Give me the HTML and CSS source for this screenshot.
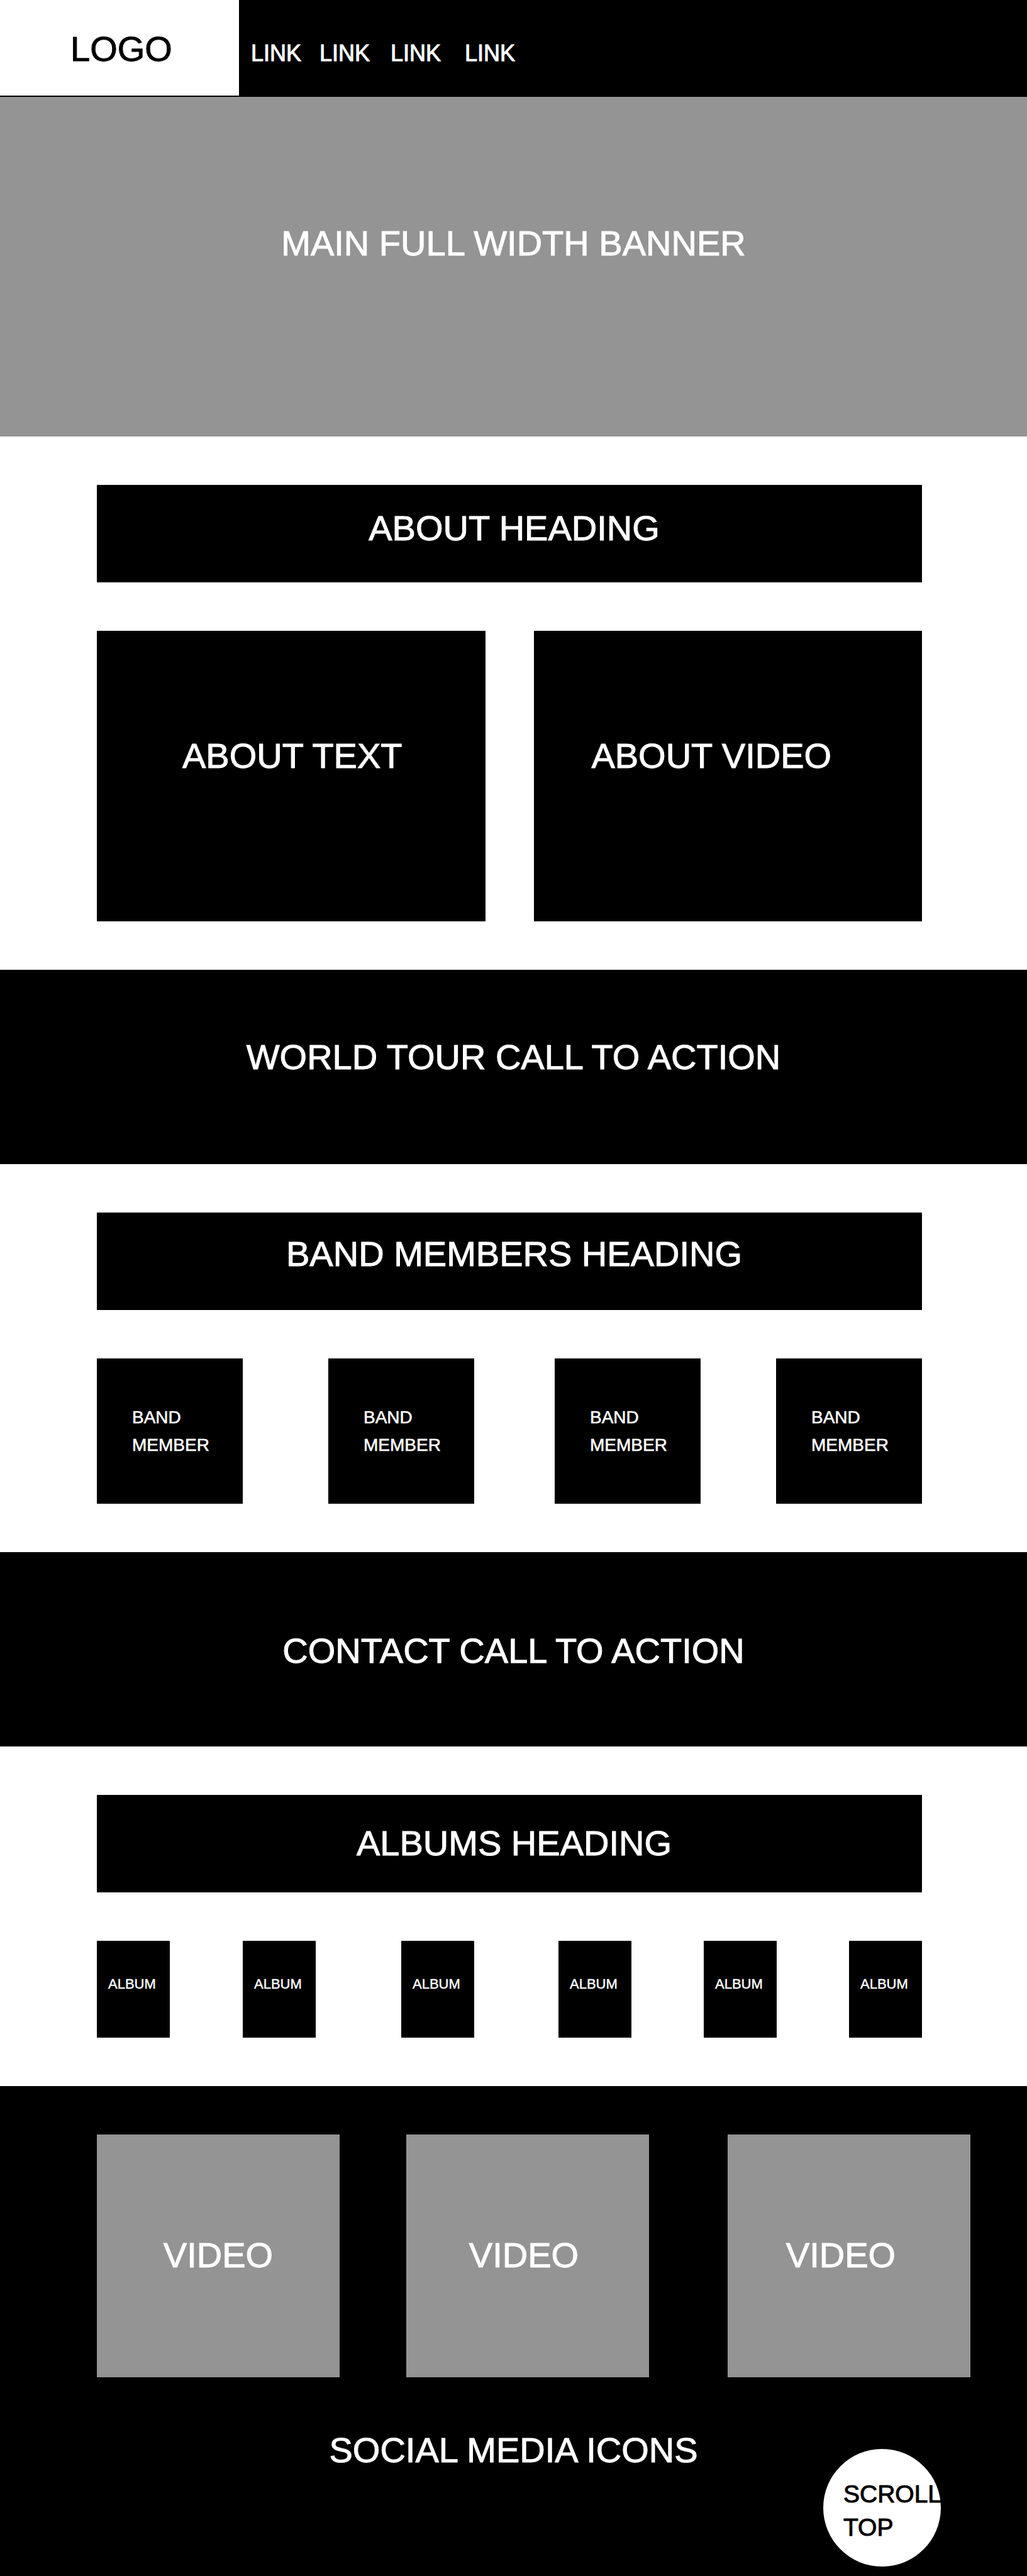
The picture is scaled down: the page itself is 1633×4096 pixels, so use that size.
FILE: index.html
```html
<!DOCTYPE html>
<html lang="en">
<head>
  <meta charset="utf-8">
  <meta name="viewport" content="width=device-width, initial-scale=1">
  <title>Band Wireframe</title>
  <link rel="stylesheet" href="styles.css">
</head>
<body>
  <header class="header" id="top">
    <a class="logo" href="#top">LOGO</a>
    <nav class="nav">
      <a href="#about">LINK</a>
      <a href="#band">LINK</a>
      <a href="#contact">LINK</a>
      <a href="#albums">LINK</a>
    </nav>
  </header>

  <main>
    <section class="banner">
      <h1 class="title">MAIN FULL WIDTH BANNER</h1>
    </section>

    <section class="section" id="about">
      <h2 class="heading heading-about">ABOUT HEADING</h2>
      <div class="about">
        <div class="panel">ABOUT TEXT</div>
        <div class="panel panel-video">ABOUT VIDEO</div>
      </div>
    </section>

    <section class="cta cta-tour">
      <h2 class="title">WORLD TOUR CALL TO ACTION</h2>
    </section>

    <section class="section" id="band">
      <h2 class="heading heading-band">BAND MEMBERS HEADING</h2>
      <div class="members">
        <div class="member">BAND<br>MEMBER</div>
        <div class="member">BAND<br>MEMBER</div>
        <div class="member">BAND<br>MEMBER</div>
        <div class="member">BAND<br>MEMBER</div>
      </div>
    </section>

    <section class="cta cta-contact" id="contact">
      <h2 class="title">CONTACT CALL TO ACTION</h2>
    </section>

    <section class="section" id="albums">
      <h2 class="heading heading-albums">ALBUMS HEADING</h2>
      <div class="albums">
        <div class="album">ALBUM</div>
        <div class="album">ALBUM</div>
        <div class="album">ALBUM</div>
        <div class="album">ALBUM</div>
        <div class="album">ALBUM</div>
        <div class="album">ALBUM</div>
      </div>
    </section>
  </main>

  <footer class="footer">
    <div class="videos">
      <div class="video">VIDEO</div>
      <div class="video video-second">VIDEO</div>
      <div class="video video-third">VIDEO</div>
    </div>
    <h2 class="title social">SOCIAL MEDIA ICONS</h2>
    <a class="scroll-top" href="#top">SCROLL<br>TOP</a>
  </footer>
</body>
</html>
```
FILE: styles.css
```css
* {
  box-sizing: border-box;
}

body {
  margin: 0;
  background: #fff;
  color: #fff;
  font-family: "Liberation Sans", Arial, sans-serif;
  font-size: 56px;
  line-height: 64px;
  /* Brings the regular face up to a medium weight */
  -webkit-text-stroke: 1px currentColor;
}

a {
  color: inherit;
  text-decoration: none;
}

h1,
h2 {
  margin: 0;
  font-size: 56px;
  font-weight: 400;
}

.title {
  text-align: center;
}

/* Header */
.header {
  display: flex;
  align-items: flex-start;
  padding-bottom: 2px;
  background: #000;
}

.logo {
  width: 380px;
  min-height: 152px;
  padding: 46px 0 0 112px;
  background: #fff;
  color: #000;
}

.nav {
  display: grid;
  grid-template-columns: 109px 113px 118px auto;
  padding: 63px 0 0 19px;
  font-size: 36px;
  line-height: 44px;
}

.banner {
  min-height: 540px;
  padding-top: 201px;
  background: #949494;
}

/* White sections */
.section {
  display: grid;
  gap: 77px;
  padding: 77px 167px 77px 154px;
}

.heading {
  min-height: 155px;
  padding-left: 15px;
  background: #000;
  text-align: center;
}

.heading-about {
  padding-top: 37px;
}

.heading-band {
  padding-top: 34px;
}

.heading-albums {
  padding-top: 45px;
}

.about {
  display: grid;
  grid-template-columns: 1fr 1fr;
  gap: 77px;
}

.panel {
  min-height: 462px;
  padding: 167px 0 0 4px;
  background: #000;
  text-align: center;
}

.panel-video {
  padding-right: 56px;
}

/* Full-width calls to action */
.cta {
  min-height: 309px;
  background: #000;
}

.cta-tour {
  padding-top: 107px;
}

.cta-contact {
  padding-top: 125px;
}

/* Band members */
.members {
  display: grid;
  grid-template-columns: 368fr 360fr 352fr 232px;
}

.member {
  width: 232px;
  min-height: 231px;
  padding: 72px 0 0 56px;
  background: #000;
  font-size: 28px;
  line-height: 44px;
  -webkit-text-stroke-width: 0.02em;
}

/* Albums */
.albums {
  display: grid;
  grid-template-columns: 232fr 252fr 250fr 231fr 231fr 116px;
}

.album {
  width: 116px;
  min-height: 154px;
  padding: 57px 0 0 18px;
  background: #000;
  font-size: 22px;
  line-height: 24px;
  -webkit-text-stroke-width: 0.02em;
}

/* Footer */
.footer {
  position: relative;
  padding: 77px 0 168px;
  background: #000;
}

.videos {
  display: grid;
  grid-template-columns: 492fr 511fr 386px;
  padding: 0 90px 0 154px;
}

.video {
  width: 386px;
  min-height: 386px;
  padding-top: 160px;
  background: #949494;
  text-align: center;
}

.video-second {
  padding-right: 12px;
}

.video-third {
  padding-right: 26px;
}

.social {
  margin-top: 84px;
}

.scroll-top {
  position: absolute;
  right: 137px;
  bottom: 15px;
  width: 187px;
  height: 187px;
  padding: 45px 0 0 32px;
  border-radius: 50%;
  background: #fff;
  color: #000;
  font-size: 39px;
  line-height: 53px;
}
```
